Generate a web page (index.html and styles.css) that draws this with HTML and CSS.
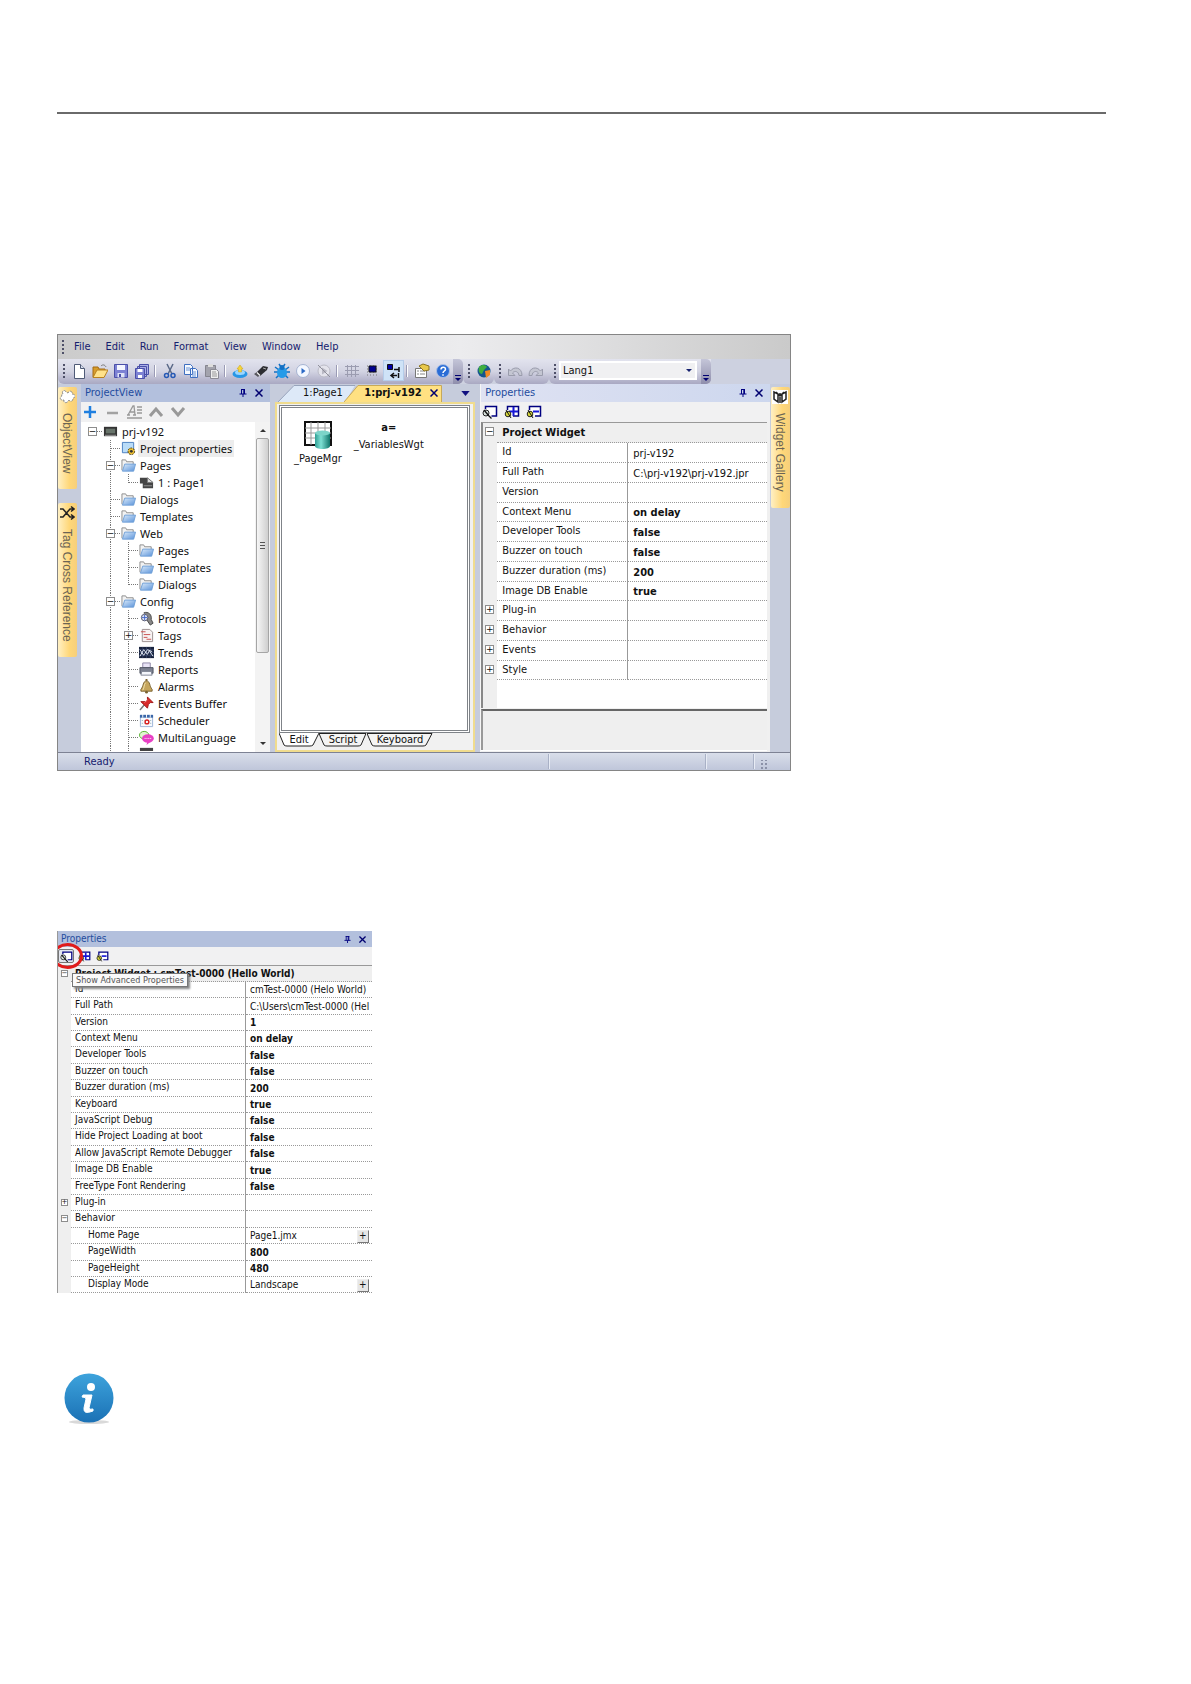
FILE: index.html
```html
<!DOCTYPE html>
<html lang="en">
<head>
<meta charset="utf-8">
<meta name="viewport" content="width=device-width, initial-scale=1">
<title>Project properties</title>
<link rel="stylesheet" href="styles.css">
</head>
<body>
<svg class="defs" aria-hidden="true">
  <defs>
    <linearGradient id="blue" x1="0" y1="0" x2="1" y2="1"><stop offset="0" stop-color="#dcebfa"/><stop offset="1" stop-color="#5a93da"/></linearGradient>
    <linearGradient id="teal"><stop offset="0" stop-color="#2f9f94"/><stop offset=".4" stop-color="#7fe0d4"/><stop offset="1" stop-color="#12766c"/></linearGradient>
    <linearGradient id="info" x1="0" y1="0" x2="0" y2="1"><stop offset="0" stop-color="#3da3dc"/><stop offset="1" stop-color="#1b71b5"/></linearGradient>
  </defs>
  <symbol id="folder" viewBox="0 0 16 16"><path d="M1 13V2h4l1 2h7v3" fill="#f2f2f2" stroke="#8c8c8c"/><path d="M1.500 14L4 6.500h11.500L13.500 14z" fill="url(#blue)" stroke="#6f9fd6"/></symbol>
  <symbol id="adv" viewBox="0 0 16 16"><path d="M3.500 5V2.500h11v9.500H9.500" fill="#fff" stroke="#000080" stroke-width="1.500"/><circle cx="4" cy="9" r="3" fill="#d9e2dc" stroke="#222"/><path d="M2 6l5 6M6 11l3.500 3.500" stroke="#111" stroke-width="1.300"/></symbol>
  <symbol id="adv-plus" viewBox="0 0 16 16"><path d="M3.500 6V2.500h11v9.500H9" fill="#fff" stroke="#000080" stroke-width="1.500"/><path d="M9.500 3v9M5 7.500h9" stroke="#1616d8" stroke-width="2"/><circle cx="4" cy="10" r="2.800" fill="#d8d83a" stroke="#222"/><path d="M2 6l5 8" stroke="#111"/></symbol>
  <symbol id="adv-minus" viewBox="0 0 16 16"><path d="M3.500 6V2.500h11v9.500H9" fill="#fff" stroke="#000080" stroke-width="1.500"/><path d="M7 7.500h6" stroke="#1616d8" stroke-width="2"/><circle cx="4" cy="10" r="2.800" fill="#d8d83a" stroke="#222"/><path d="M2 6l5 8" stroke="#111"/></symbol>
  <symbol id="pin" viewBox="0 0 8 8"><path d="M2 0.500h4M2.500 0v5M5.500 0v5M4.800 0v5M0.500 5h7M4 5v3" stroke="#000080" fill="none"/></symbol>
  <symbol id="close" viewBox="0 0 8 8"><path d="M0.500 0.500l7 7M7.500 0.500l-7 7" stroke="#000070" stroke-width="1.500"/></symbol>
  <symbol id="curl" viewBox="0 0 16 16"><path d="M1.500 6v6.500H8L5.500 10c2-2.500 6-2 6.500 2.500h3C15 4 7 3 3.500 8z" fill="#c4c6d2" stroke="#9a9cac"/></symbol>
  <symbol id="more" viewBox="0 0 10 24"><path d="M2 15.500h6" stroke="#000070"/><path d="M2 18h6l-3 3z" fill="#000070"/></symbol>
</svg>

<main class="page">
  <hr class="rule">

  <section class="app" aria-label="Project editor">
    <nav class="menubar">
      <span class="grip"></span>
      <button>File</button><button>Edit</button><button>Run</button><button>Format</button><button>View</button><button>Window</button><button>Help</button>
    </nav>
    <div class="toolbars">
      <div class="toolbar">
        <span class="grip"></span>
        <button aria-label="New"><svg viewBox="0 0 16 16"><path d="M3.500 1.500h6l4 4v10h-10z" fill="#fff" stroke="#4f5a77"/><path d="M9.500 1.500v4h4" fill="#d5dcec" stroke="#4f5a77"/></svg></button>
        <button aria-label="Open"><svg viewBox="0 0 16 16"><path d="M1 14V4h5l1 2h6v3" fill="#d79c2c" stroke="#a46a14"/><path d="M1 14.500L5 7h11l-4 7.500z" fill="#ffe28a" stroke="#b98220"/><path d="M9 3c2-2 4-1 5 1" fill="none" stroke="#777"/></svg></button>
        <button aria-label="Save"><svg viewBox="0 0 16 16"><path d="M1.500 1.500h13v13h-13z" fill="#7d82d4" stroke="#4a4fa8"/><path d="M4 2h8v5H4z" fill="#f4f6ff"/><path d="M4.500 10h7v4.500h-7z" fill="#dfe3f5"/><path d="M6 11h2v3H6z" fill="#4a4fa8"/></svg></button>
        <button aria-label="Save all"><svg viewBox="0 0 16 16"><path d="M5.500 1.500h9v10h-9zM3.500 3.500h9v10h-9z" fill="#a9aee6" stroke="#4a4fa8"/><path d="M1.500 5.500h9v10h-9z" fill="#7d82d4" stroke="#4a4fa8"/><path d="M3.500 6h5v3h-5zM4 12h4v3H4z" fill="#fff"/></svg></button>
        <span class="sep"></span>
        <button aria-label="Cut"><svg viewBox="0 0 16 16"><path d="M5 1l5 10M11 1L6 11" stroke="#5b6a88" stroke-width="1.500"/><circle cx="4.500" cy="12.500" r="2" fill="none" stroke="#2659b5" stroke-width="1.500"/><circle cx="11" cy="12.500" r="2" fill="none" stroke="#2659b5" stroke-width="1.500"/></svg></button>
        <button aria-label="Copy"><svg viewBox="0 0 16 16"><path d="M1.500 1.500h6l2 2v8h-8zM7.500 5.500h5l2 2v7h-7z" fill="#f5f9ff" stroke="#3f6fc0"/><path d="M3 5h4M3 7h4M9 9h4M9 11h4M9 13h4" stroke="#6b93d4"/></svg></button>
        <button aria-label="Paste"><svg viewBox="0 0 16 16"><path d="M1.500 2.500h10v11h-10z" fill="#a3a3ad" stroke="#85858f"/><path d="M4 1h5v3H4z" fill="#ddd"/><path d="M6.500 6.500h6l2 2v7h-8z" fill="#eee" stroke="#8b8b95"/><path d="M8 9h4M8 11h5M8 13h5" stroke="#999"/></svg></button>
        <span class="sep"></span>
        <button aria-label="Download"><svg viewBox="0 0 16 16"><ellipse cx="8" cy="11" rx="7.500" ry="4" fill="#2897e6"/><ellipse cx="8" cy="9.500" rx="5" ry="2.500" fill="#9bd6ff"/><path d="M8 2l3 4H9.500v3h-3V6H5z" fill="#f4d63a" stroke="#c99d1c" stroke-width=".5"/></svg></button>
        <button aria-label="Clean"><svg viewBox="0 0 16 16"><path d="M4 9l6-6 5 1-1 3-7 6z" fill="#2c2c31"/><path d="M1 11l3-2 3 3-2 2z" fill="#55555c"/><path d="M4 9.500l3 3" stroke="#f2f2f2" stroke-width="1.200"/><path d="M10 5l3 1" stroke="#aaa"/></svg></button>
        <button aria-label="Debug"><svg viewBox="0 0 16 16"><path d="M1 4l4 3M15 4l-4 3M0 9h16M2 15l4-4M14 15l-4-4M5 1l2 3M11 1L9 4" stroke="#1470c4" stroke-width="1.500"/><ellipse cx="8" cy="9.500" rx="5" ry="5.500" fill="#269be8"/><circle cx="8" cy="4.500" r="2.500" fill="#1470c4"/></svg></button>
        <button aria-label="Run"><svg viewBox="0 0 16 16"><circle cx="8" cy="8" r="6.500" fill="#f3f7ff" stroke="#a6b4d2"/><path d="M6.500 5L10.500 8l-4 3z" fill="#2b6ac6"/></svg></button>
        <button aria-label="Stop"><svg viewBox="0 0 16 16"><circle cx="8" cy="8" r="6" fill="#e4e4ec" stroke="#bbbbc6"/><path d="M6 4.500L11.500 8 6 11.500z" fill="#b9b9c4"/><path d="M2 2l12 12" stroke="#8f8f9a"/></svg></button>
        <span class="sep"></span>
        <button aria-label="Grid"><svg viewBox="0 0 16 16"><path d="M1 3.500h14M1 7.500h14M1 11.500h14M3.500 2v12M7.500 2v12M11.500 2v12" stroke="#9b9cb0"/></svg></button>
        <button aria-label="Snap"><svg viewBox="0 0 16 16"><path d="M2 3h12M2 6h12M2 9h12M2 12h12" stroke="#777" stroke-dasharray="1 2"/><path d="M4 3h7v6H4z" fill="#000090" stroke="#111"/></svg></button>
        <button class="on" aria-label="Snap to object"><svg viewBox="0 0 16 16"><path d="M1.500 1.500h5v5h-5z" fill="#0000a8" stroke="#111"/><path d="M8 6.500h5M13 4v5M5 12.500h6M8 10l-3 2.500L8 15M12.500 10v5" fill="none" stroke="#111" stroke-width="1.500"/></svg></button>
        <span class="sep"></span>
        <button aria-label="Properties"><svg viewBox="0 0 16 16"><path d="M1.500 5.500h11v9h-11z" fill="#fff" stroke="#777"/><path d="M3 8h2M3 11h2M6 8h5M6 11h5" stroke="#888"/><path d="M5 3l4-2 6 2v4l-5 1z" fill="#e8c84c" stroke="#8c7420"/></svg></button>
        <button aria-label="Help"><svg viewBox="0 0 16 16"><circle cx="8" cy="8" r="6.500" fill="#2a6cd6" stroke="#a9bfe6"/><path d="M6 6.500c0-3 4.500-3 4.500-.3C10.500 8 8 8 8 10M8 11.300v1.500" stroke="#fff" stroke-width="1.500" fill="none"/></svg></button>
        <button class="more" aria-label="More"><svg><use href="#more"/></svg></button>
      </div>
      <div class="toolbar">
        <span class="grip"></span>
        <button aria-label="Web"><svg viewBox="0 0 16 16"><circle cx="8" cy="8" r="6.500" fill="#14558f"/><path d="M3 4c3-3 7-2 8 0l-3 3-2 4c-3 0-4-4-3-7z" fill="#3fae3f"/><path d="M9 8l5-1v5l-4 3z" fill="#f08a24"/></svg></button>
      </div>
      <div class="toolbar undo">
        <span class="grip"></span>
        <button aria-label="Undo"><svg><use href="#curl"/></svg></button>
        <button aria-label="Redo"><svg class="flip"><use href="#curl"/></svg></button>
      </div>
      <div class="toolbar">
        <span class="grip"></span>
        <span class="lang"><select aria-label="Language"><option>Lang1</option></select></span>
        <button class="more" aria-label="More"><svg><use href="#more"/></svg></button>
      </div>
    </div>

    <div class="workspace">
      <div class="rail">
        <button class="side-tab"><svg viewBox="0 0 16 16"><path d="M4 5c-2-3 2-5 3-2l2 1c1-3 5-2 4 1 4 0 4 4 1 4 0 4-3 4-4 2-2 4-6 3-5 0-4 1-5-3-2-4-1-1 0-2 1-2z" fill="#fff" stroke="#8d8d8d" stroke-dasharray="3 1"/></svg>ObjectView</button>
        <button class="side-tab tall"><svg viewBox="0 0 16 16"><path d="M1 4h3l7 8h4M1 12h3l7-8h4M12 1.500L15 4l-3 2.500M12 9.500l3 2.500-3 2.500" fill="none" stroke="#222" stroke-width="1.500"/></svg>Tag Cross Reference</button>
      </div>

      <section class="panel project">
        <header class="title"><h2>ProjectView</h2><button aria-label="Pin"><svg><use href="#pin"/></svg></button><button aria-label="Close"><svg><use href="#close"/></svg></button></header>
        <div class="tools wide">
          <button aria-label="Add"><svg viewBox="0 0 16 16"><path d="M8 2v12M2 8h12" stroke="#1f7fe0" stroke-width="2.500"/></svg></button>
          <button aria-label="Remove"><svg viewBox="0 0 16 16"><path d="M3 9h11" stroke="#a2a2a2" stroke-width="2.500"/></svg></button>
          <button aria-label="Rename"><svg viewBox="0 0 16 16"><path d="M2 11L7 2h1l1 9M4 8h5M1 11h3M7 11h3M11 3h5M11 6h5M11 9h5M1 14h15" fill="none" stroke="#999" stroke-width="1.300"/></svg></button>
          <button aria-label="Move up"><svg viewBox="0 0 16 16"><path d="M2 12l6-7 6 7" fill="none" stroke="#999" stroke-width="3"/></svg></button>
          <button aria-label="Move down"><svg viewBox="0 0 16 16"><path d="M2 4l6 7 6-7" fill="none" stroke="#999" stroke-width="3"/></svg></button>
        </div>
        <div class="tree-wrap">
          <ul class="tree">
            <li><i class="g h"><button class="box" aria-label="Collapse">−</button></i><svg viewBox="0 0 16 16"><path d="M1 3h14v10H1z" fill="#333"/><path d="M3 5h10v5H3z" fill="#67736a"/><path d="M2 12h12" stroke="#aaa"/></svg>prj-v192</li>
            <li class="sel"><i class="g"></i><i class="g v h"></i><svg viewBox="0 0 16 16"><path d="M1.500 1.500h12v11h-12z" fill="#b9dcf8" stroke="#4a7fc0"/><circle cx="11" cy="11" r="3.500" fill="#f1c232" stroke="#3d3210" stroke-dasharray="2 1"/><circle cx="11" cy="11" r="1.500" fill="#333"/></svg><span>Project properties</span></li>
            <li><i class="g"></i><i class="g v h"><button class="box" aria-label="Collapse">−</button></i><svg><use href="#folder"/></svg>Pages</li>
            <li><i class="g"></i><i class="g v"></i><i class="g v h end"></i><svg viewBox="0 0 16 16"><path d="M1 3h8l6 5v6H4V9H1z" fill="#444"/><path d="M9 3v5h6z" fill="#ddd" stroke="#777"/><path d="M5 11.500h9" stroke="#999"/></svg>1 : Page1</li>
            <li><i class="g"></i><i class="g v h"></i><svg><use href="#folder"/></svg>Dialogs</li>
            <li><i class="g"></i><i class="g v h"></i><svg><use href="#folder"/></svg>Templates</li>
            <li><i class="g"></i><i class="g v h"><button class="box" aria-label="Collapse">−</button></i><svg><use href="#folder"/></svg>Web</li>
            <li><i class="g"></i><i class="g v"></i><i class="g v h"></i><svg><use href="#folder"/></svg>Pages</li>
            <li><i class="g"></i><i class="g v"></i><i class="g v h"></i><svg><use href="#folder"/></svg>Templates</li>
            <li><i class="g"></i><i class="g v"></i><i class="g v h end"></i><svg><use href="#folder"/></svg>Dialogs</li>
            <li><i class="g"></i><i class="g v h"><button class="box" aria-label="Collapse">−</button></i><svg><use href="#folder"/></svg>Config</li>
            <li><i class="g"></i><i class="g v"></i><i class="g v h"></i><svg viewBox="0 0 16 16"><path d="M5 2c5-2 9 2 8 7l2 4-3 2-4-6" fill="#888" stroke="#444"/><circle cx="6" cy="7" r="3.500" fill="#dfe6f8" stroke="#556"/><path d="M6 4v6M3 7h6" stroke="#4468c8"/></svg>Protocols</li>
            <li><i class="g"></i><i class="g v"></i><i class="g v h"><button class="box" aria-label="Expand">+</button></i><svg viewBox="0 0 16 16"><path d="M3.500 1.500h8l3 3v10h-11z" fill="#f7f3f3" stroke="#9a8f8f"/><path d="M2 4h5M5 7h7M5 10h4M8 12h5" stroke="#c94d4d"/></svg>Tags</li>
            <li><i class="g"></i><i class="g v"></i><i class="g v h"></i><svg viewBox="0 0 16 16"><path d="M0 2h16v12H0z" fill="#18233e"/><path d="M0 5h16M0 8h16M0 11h16M4 2v12M8 2v12M12 2v12" stroke="#4a5c86" stroke-width=".5"/><path d="M1 12l4-7 4 5 2-4 4 6M1 5l4 6 4-6 5 2" fill="none" stroke="#e5ecf7"/></svg>Trends</li>
            <li><i class="g"></i><i class="g v"></i><i class="g v h"></i><svg viewBox="0 0 16 16"><path d="M4 1h8v5H4z" fill="#e9e4f6" stroke="#8d86a5"/><path d="M1 6h14v6H1z" fill="#7d8291" stroke="#4d5260"/><path d="M3 10h10l1 4H2z" fill="#f4f6fb" stroke="#7d8291"/></svg>Reports</li>
            <li><i class="g"></i><i class="g v"></i><i class="g v h"></i><svg viewBox="0 0 16 16"><path d="M8 2c4 0 3 6 6 9v2H2v-2c3-3 2-9 6-9z" fill="#c5a55c" stroke="#7a6230"/><path d="M7 4c-2 2-1 5-3 8" stroke="#f3e4b0" fill="none"/><circle cx="8" cy="14" r="1.500" fill="#7a6230"/><path d="M8 0v2" stroke="#7a6230" stroke-width="2"/></svg>Alarms</li>
            <li><i class="g"></i><i class="g v"></i><i class="g v h"></i><svg viewBox="0 0 16 16"><path d="M1 15l5-6" stroke="#777" stroke-width="1.500"/><path d="M2 6l7 7 1-4 2-2 3 0-6-6 0 3-2 2z" fill="#d92b2b" stroke="#a01515"/><path d="M6 7l3-3" stroke="#ff9a9a"/></svg>Events Buffer</li>
            <li><i class="g"></i><i class="g v"></i><i class="g v h"></i><svg viewBox="0 0 16 16"><path d="M1.500 2.500h13v12h-13z" fill="#f7faff" stroke="#9bb2d6"/><path d="M1 2h14v3H1z" fill="#3a66a8"/><path d="M4 1v4M8 1v4M12 1v4" stroke="#fff"/><path d="M3 8h11M3 11h11" stroke="#8aa" stroke-dasharray="1 2"/><circle cx="8.500" cy="9.500" r="2" fill="none" stroke="#d92020" stroke-width="1.500"/></svg>Scheduler</li>
            <li><i class="g"></i><i class="g v"></i><i class="g v h"></i><svg viewBox="0 0 16 16"><ellipse cx="5.500" cy="5.500" rx="5" ry="4" fill="#dff5d0" stroke="#55b02e"/><ellipse cx="9.500" cy="9" rx="6.300" ry="4.500" fill="#e83fc4"/><path d="M9 12l-1 4 5-4z" fill="#e83fc4"/><path d="M6 9h7" stroke="#fff" stroke-dasharray="1 1"/></svg>MultiLanguage</li>
            <li class="cut"><i class="g"></i><i class="g v"></i><i class="g v"></i><svg viewBox="0 0 16 16"><path d="M1 2h14v12H1z" fill="#444"/></svg>System Group</li>
          </ul>
          <div class="scroll" aria-hidden="true"><span class="arrow up"></span><span class="thumb"></span><span class="arrow down"></span></div>
        </div>
      </section>

      <section class="editor">
        <div class="doc-tabs">
          <button class="doc first"><svg viewBox="0 0 78 18" preserveAspectRatio="none"><path d="M0 18L16 1.500h61l-10 16.500z" fill="#dde9f8"/><path d="M0 18L16 1.500h61" fill="none" stroke="#98a4bc"/></svg><span>1:Page1</span></button>
          <button class="doc active"><svg viewBox="0 0 98 18" preserveAspectRatio="none"><path d="M0 18L14 1.500h83.500V18z" fill="#ffe182"/><path d="M0 18L14 1.500h83.500V18" fill="none" stroke="#c7a95a"/></svg><span>1:prj-v192</span></button>
          <button class="doc-close" aria-label="Close page"><svg><use href="#close"/></svg></button>
          <button class="doc-list" aria-label="Pages"><svg viewBox="0 0 10 6"><path d="M0 0h10L5 6z" fill="#101080"/></svg></button>
        </div>
        <div class="frame">
          <div class="canvas">
            <figure><svg class="big" viewBox="0 0 30 30"><path d="M2 2h26v23H2z" fill="#fff" stroke="#111" stroke-width="2"/><path d="M2 8h26M2 13h26M2 18h26M8 2v23M15 2v23M22 2v23" stroke="#999"/><path d="M12 13v13c0 4 15 4 15 0V13z" fill="url(#teal)"/><ellipse cx="19.500" cy="13" rx="7.500" ry="2.500" fill="#7cd4c9"/></svg><figcaption>_PageMgr</figcaption></figure>
            <figure><b>a=</b><figcaption>_VariablesWgt</figcaption></figure>
          </div>
          <div class="sheet-tabs">
            <button class="sheet on"><svg viewBox="0 0 40 14" preserveAspectRatio="none"><path d="M0 0l5 12q1 1 3 1h23q2 0 3-1l6-12" fill="#fff" stroke="#222"/></svg><span>Edit</span></button>
            <button class="sheet"><svg viewBox="0 0 48 14" preserveAspectRatio="none"><path d="M0 .5l5 11.500q1 1 3 1h31q2 0 3-1l5-11.500z" fill="#f4f4f4" stroke="#222"/></svg><span>Script</span></button>
            <button class="sheet key"><svg viewBox="0 0 66 14" preserveAspectRatio="none"><path d="M0 .5l5 11.500q1 1 3 1h48q2 0 3-1l6-11.500z" fill="#f4f4f4" stroke="#222"/></svg><span>Keyboard</span></button>
          </div>
        </div>
      </section>

      <section class="panel props">
        <header class="title light"><h2>Properties</h2><button aria-label="Pin"><svg><use href="#pin"/></svg></button><button aria-label="Close"><svg><use href="#close"/></svg></button></header>
        <div class="tools">
          <button aria-label="Show Advanced Properties"><svg><use href="#adv"/></svg></button>
          <button aria-label="Expand all"><svg><use href="#adv-plus"/></svg></button>
          <button aria-label="Collapse all"><svg><use href="#adv-minus"/></svg></button>
        </div>
        <div class="grid-wrap">
          <table class="grid">
            <colgroup><col class="gutter"><col class="name"><col></colgroup>
            <thead><tr><td><button class="box" aria-label="Collapse">−</button></td><th colspan="2">Project Widget</th></tr></thead>
            <tbody>
              <tr><td></td><th>Id</th><td>prj-v192</td></tr>
              <tr><td></td><th>Full Path</th><td>C:\prj-v192\prj-v192.jpr</td></tr>
              <tr><td></td><th>Version</th><td></td></tr>
              <tr><td></td><th>Context Menu</th><td><b>on delay</b></td></tr>
              <tr><td></td><th>Developer Tools</th><td><b>false</b></td></tr>
              <tr><td></td><th>Buzzer on touch</th><td><b>false</b></td></tr>
              <tr><td></td><th>Buzzer duration (ms)</th><td><b>200</b></td></tr>
              <tr><td></td><th>Image DB Enable</th><td><b>true</b></td></tr>
              <tr><td><button class="box" aria-label="Expand">+</button></td><th>Plug-in</th><td></td></tr>
              <tr><td><button class="box" aria-label="Expand">+</button></td><th>Behavior</th><td></td></tr>
              <tr><td><button class="box" aria-label="Expand">+</button></td><th>Events</th><td></td></tr>
              <tr><td><button class="box" aria-label="Expand">+</button></td><th>Style</th><td></td></tr>
            </tbody>
          </table>
        </div>
        <div class="hint"></div>
      </section>

      <div class="rail right">
        <button class="side-tab gallery"><svg viewBox="0 0 16 16"><path d="M0 1h16v14H0z" fill="#fff"/><path d="M2 3v7l4 3V5zM14 3v7l-4 3V5zM8 4v10M4 3l4 4 4-4" fill="none" stroke="#222" stroke-width="1.500"/></svg>Widget Gallery</button>
      </div>
    </div>

    <footer class="status"><span>Ready</span><i></i><i></i><i></i></footer>
  </section>

  <section class="panel props small" aria-label="Advanced properties">
    <header class="title"><h2>Properties</h2><button aria-label="Pin"><svg><use href="#pin"/></svg></button><button aria-label="Close"><svg><use href="#close"/></svg></button></header>
    <div class="tools">
      <button class="pressed" aria-label="Show Advanced Properties"><svg><use href="#adv"/></svg></button>
      <button aria-label="Expand all"><svg><use href="#adv-plus"/></svg></button>
      <button aria-label="Collapse all"><svg><use href="#adv-minus"/></svg></button>
    </div>
    <table class="grid">
      <colgroup><col class="gutter"><col class="name"><col></colgroup>
      <thead><tr><td><button class="box" aria-label="Collapse">−</button></td><th colspan="2">Project Widget : cmTest-0000 (Hello World)</th></tr></thead>
      <tbody>
        <tr><td></td><th>Id</th><td>cmTest-0000 (Helo World)</td></tr>
        <tr><td></td><th>Full Path</th><td>C:\Users\cmTest-0000 (Hel</td></tr>
        <tr><td></td><th>Version</th><td><b>1</b></td></tr>
        <tr><td></td><th>Context Menu</th><td><b>on delay</b></td></tr>
        <tr><td></td><th>Developer Tools</th><td><b>false</b></td></tr>
        <tr><td></td><th>Buzzer on touch</th><td><b>false</b></td></tr>
        <tr><td></td><th>Buzzer duration (ms)</th><td><b>200</b></td></tr>
        <tr><td></td><th>Keyboard</th><td><b>true</b></td></tr>
        <tr><td></td><th>JavaScript Debug</th><td><b>false</b></td></tr>
        <tr><td></td><th>Hide Project Loading at boot</th><td><b>false</b></td></tr>
        <tr><td></td><th>Allow JavaScript Remote Debugger</th><td><b>false</b></td></tr>
        <tr><td></td><th>Image DB Enable</th><td><b>true</b></td></tr>
        <tr><td></td><th>FreeType Font Rendering</th><td><b>false</b></td></tr>
        <tr><td><button class="box" aria-label="Expand">+</button></td><th>Plug-in</th><td></td></tr>
        <tr><td><button class="box" aria-label="Collapse">−</button></td><th>Behavior</th><td></td></tr>
        <tr class="sub"><td></td><th>Home Page</th><td><span class="cell">Page1.jmx<button class="pick">+</button></span></td></tr>
        <tr class="sub"><td></td><th>PageWidth</th><td><b>800</b></td></tr>
        <tr class="sub"><td></td><th>PageHeight</th><td><b>480</b></td></tr>
        <tr class="sub"><td></td><th>Display Mode</th><td><span class="cell">Landscape<button class="pick">+</button></span></td></tr>
      </tbody>
    </table>
    <div class="tip" role="tooltip">Show Advanced Properties</div>
    <span class="ring"></span>
  </section>

  <svg class="note" viewBox="0 0 52 52" role="img" aria-label="Information"><ellipse cx="26" cy="49" rx="20" ry="2" fill="#d9d9d9"/><circle cx="26" cy="25" r="24.500" fill="url(#info)"/><circle cx="28" cy="14" r="4" fill="#fff"/><path d="M20 22h9l-3 13q0 2 4 1v2q-10 4-9-3l2-9q0-2-4-2z" fill="#fff" stroke="#fff"/></svg>
</main>
</body>
</html>
```
FILE: styles.css
```css
* { box-sizing: border-box; }
body { margin: 0; background: #fff; color: #111; font: 11px/16px "DejaVu Sans Condensed", "DejaVu Sans", sans-serif; }
button { display: inline-flex; align-items: center; justify-content: center; margin: 0; padding: 0; border: 0; background: none; color: inherit; font: inherit; }
svg { display: block; flex: none; width: 16px; height: 16px; }
.defs { position: absolute; width: 0; height: 0; }
h2 { margin: 0; font: inherit; }

.page { padding: 112px 85px 240px 57px; }
.rule { height: 2px; margin: 0 0 220px; border: 0; background: #6a6a6a; }

/* Application window */
.app { width: 70%; min-width: 734px; border: 1px solid #858585; background: #c6ccdc; }
.menubar { display: flex; align-items: center; gap: 15px; height: 24px; padding-left: 4px; background: linear-gradient(90deg, #cbcbcb, #ececee 55%, #cacaca); color: #15206e; }
.menubar .grip { margin-right: -5px; }
.grip { flex: none; width: 2px; height: 14px; background: repeating-linear-gradient(#4e5068 0 2px, transparent 2px 4px); }

.toolbars { display: flex; height: 25px; background: #cdd1e0; }
.toolbar { display: flex; align-items: center; padding: 0 0 2px 5px; border-radius: 0 0 6px 6px; background: linear-gradient(#e2e3ee, #d2d3e2 50%, #a9a8c2); }
.toolbar .grip { margin-right: 3px; }
.toolbar button { width: 21px; height: 21px; }
.toolbar button.on { border: 1px solid #b5cdea; background: #cfe3f7; }
.toolbar .more { align-self: flex-start; width: 10px; height: 25px; background: linear-gradient(#c4c5d8, #8f8eac); border-radius: 0 5px 5px 0; }
.toolbar .more svg { width: 10px; height: 24px; }
.toolbar.undo { padding-right: 3px; }
.sep { width: 1px; height: 12px; margin: 0 3px; background: #fff; box-shadow: -1px 0 #9a9bb5; }
.flip { transform: scaleX(-1); }
.lang { position: relative; width: 138px; height: 19px; margin-right: 4px; }
.lang select { display: block; width: 100%; height: 19px; padding: 0 2px; border: 2px solid #fff; background: #f0f0f2; appearance: none; color: #111; font: inherit; }
.lang::after { content: ""; position: absolute; right: 5px; top: 8px; border: 3px solid transparent; border-top-color: #15206e; }

.workspace { display: flex; min-height: 369px; border-bottom: 1px solid #7d8294; }
.rail { display: flex; flex: none; flex-direction: column; gap: 14px; width: 23px; padding-top: 3px; }
.rail.right { align-items: flex-end; width: 20px; }
.side-tab { justify-content: flex-start; gap: 8px; width: 19px; height: 102px; padding: 2px 1px 0 0; border-radius: 2px; background: linear-gradient(90deg, #fff0c4, #ffd778 60%, #f6cf7b); color: #6b6455; font: 12px/18px "Liberation Sans", sans-serif; writing-mode: vertical-rl; white-space: nowrap; }
.side-tab.tall { height: 154px; }
.side-tab.gallery { height: 121px; }

.panel { display: flex; flex-direction: column; background: #f0f0f0; }
.project { flex: none; width: 189px; }
.title { display: flex; align-items: center; gap: 8px; height: 18px; padding: 0 7px 0 4px; background: #b3c0dd; color: #1f4c9e; }
.title h2 { flex: 1; }
.title svg { width: 8px; height: 8px; }
.title.light { background: linear-gradient(90deg, #dfe2f2, #cdd7ee); }
.tools { display: flex; align-items: center; gap: 6px; height: 20px; padding-left: 1px; background: #f1f1f2; }

.tree-wrap { display: flex; flex: 1; overflow: hidden; background: #fff; }
.tree { flex: 1; margin: 0; padding: 1px 0 0 3px; list-style: none; font: 11px/17px "Noto Sans", "Open Sans", sans-serif; white-space: nowrap; }
.tree li { display: flex; align-items: center; height: 17px; }
.tree li.cut { align-items: flex-start; height: 5px; overflow: hidden; }
.tree li > svg { width: 15px; height: 15px; margin: 0 4px 0 1px; }
.sel span { margin-left: -2px; padding: 0 2px; background: #ededed; }
.g { position: relative; flex: none; width: 18px; height: 17px; }
.g.v::before { content: ""; position: absolute; left: 8px; top: 0; bottom: 0; border-left: 1px dotted #777; }
.g.end::before { bottom: 8px; }
.g.h::after { content: ""; position: absolute; left: 9px; right: 0; top: 8px; border-top: 1px dotted #777; }
.box { width: 9px; height: 9px; border: 1px solid #8d8d8d; background: #fff; font: 9px/7px "DejaVu Sans", sans-serif; }
.g .box { position: absolute; z-index: 1; left: 4px; top: 4px; }
.scroll { display: flex; flex-direction: column; align-items: center; width: 15px; padding: 7px 1px; background: #f3f3f3; }
.thumb { width: 13px; height: 215px; margin-top: 6px; border: 1px solid #a5a5a5; border-radius: 2px; background: repeating-linear-gradient(#555 0 1px, transparent 1px 3px) center / 5px 8px no-repeat, linear-gradient(90deg, #f6f6f6, #cfcfcf); }
.arrow { border: 3px solid transparent; }
.arrow.up { border-top: 0; border-bottom-color: #333; }
.arrow.down { margin-top: auto; border-bottom: 0; border-top-color: #333; }

.editor { display: flex; flex: 1; flex-direction: column; margin: 0 5px; }
.doc-tabs { display: flex; height: 18px; padding-left: 3px; }
.doc { position: relative; width: 78px; height: 18px; padding-left: 12px; }
.doc svg { position: absolute; inset: 0; width: 100%; height: 100%; }
.doc span { position: relative; }
.doc.active { width: 98px; margin-left: -12px; padding: 0; font-weight: bold; }
.doc-close { position: relative; width: 8px; margin-left: -12px; }
.doc-close svg { width: 8px; height: 8px; }
.doc-list { margin: 0 5px 0 auto; }
.doc-list svg { width: 9px; height: 5px; }
.frame { display: flex; flex: 1; flex-direction: column; padding: 1px 3px 2px 2px; border: 2px solid #f0dc8e; background: #f1f1f1; }
.canvas { display: flex; flex: 1; gap: 12px; align-items: flex-start; padding: 12px; border: 3px double #7f8388; background: #fff; }
figure { display: flex; flex-direction: column; align-items: center; margin: 0; }
figure .big { width: 30px; height: 30px; }
figcaption { padding-top: 1px; }
.sheet-tabs { display: flex; height: 15px; }
.sheet { position: relative; width: 40px; height: 14px; line-height: 12px; padding-bottom: 1px; }
.sheet + .sheet { width: 48px; }
.sheet + .sheet.key { width: 66px; }
.sheet svg { position: absolute; inset: 0; width: 100%; height: 100%; }
.sheet span { position: relative; }

.props { flex: none; width: 290px; border-left: 1px solid #f6f6f6; }
.grid-wrap { height: 286px; margin-right: 3px; border-left: 2px solid #888; border-top: 1px solid #999; background: linear-gradient(90deg, #efefef 14px, #fff 14px); }
.grid { width: 100%; border-collapse: separate; border-spacing: 0; table-layout: fixed; white-space: nowrap; }
.grid .gutter { width: 14px; }
.grid .name { width: 131px; }
.grid td, .grid th { height: 20px; padding: 0 0 0 5px; border-bottom: 1px dotted #999; font-weight: normal; line-height: 16px; text-align: left; overflow: hidden; }
.grid td:first-child { padding: 4px 0 0 2px; border: 0; background: #efefef; vertical-align: top; }
.grid td:first-child .box { display: flex; }
.grid tbody th { padding-top: 1px; border-right: 1px solid #999; vertical-align: top; }
.grid tbody td:last-child { vertical-align: bottom; }
.grid thead th { height: 19px; background: #efefef; font-weight: bold; }
.props:not(.small) tbody tr:nth-child(4n) > * { height: 19px; }
.hint { flex: 1; margin: 1px 3px 2px 0; border-top: 2px solid #666; border-left: 2px solid #999; background: #efefef; box-shadow: 0 1px #fff; }

.status { display: flex; align-items: center; justify-content: flex-end; height: 17px; padding-left: 26px; background: linear-gradient(#d9deea, #bfc6da); color: #15206e; }
.status span { margin-right: auto; }
.status i { width: 157px; height: 15px; border-left: 1px solid #a9b1c6; box-shadow: inset 1px 0 #e8ecf5; }
.status i + i { width: 48px; }
.status i + i + i { width: 37px; padding: 6px 22px 0 5px; background: radial-gradient(circle, #8b91a8 1px, transparent 1px) 6px 4px / 4px 4px repeat; background-clip: content-box; }

/* Detail of the property list */
.small { position: relative; width: 30%; min-width: 314px; margin: 160px 0 80px; border-left: 1px solid #999; overflow: hidden; font-size: 10px; line-height: 14px; }
.small .title { height: 16px; padding: 0 6px 0 3px; }
.small .title svg { width: 7px; height: 7px; }
.small .tools { height: 18px; gap: 2px; padding: 0; }
.small .tools button { width: 16px; height: 14px; }
.small .tools svg { width: 13px; height: 13px; }
.small .tools .pressed { border: 1px solid #777; border-radius: 2px; background: #e3e6ee; }
.small .grid { background: #fff; border-top: 1px solid #999; }
.small .grid .gutter { width: 13px; }
.small .grid .name { width: 175px; }
.small .grid td, .small .grid th { height: 16px; padding: 0 0 0 4px; line-height: 14px; }
.small .grid td:first-child { padding: 4px 0 0 3px; }
.small .box { width: 7px; height: 7px; font-size: 7px; line-height: 5px; }
.small tbody tr:nth-child(5n) > *, .small tbody tr:nth-child(5n+2) > * { height: 17px; }
.small .grid .sub th { padding-left: 17px; }
.cell { display: flex; align-items: center; justify-content: space-between; height: 14px; padding-right: 3px; }
.pick { width: 12px; height: 13px; border: 1px solid; border-color: #eee #777 #777 #eee; background: #e6e6e6; }
.tip { position: absolute; left: 14px; top: 42px; padding: 0 3px; border: 1px solid #777; background: #fafafa; box-shadow: 2px 2px 2px #888; color: #555; font-size: 9px; line-height: 12px; }
.ring { position: absolute; left: -6px; top: 12px; width: 31px; height: 26px; border: 3px solid #e01b1b; border-radius: 50%; }

.note { width: 52px; height: 52px; margin-left: 6px; }
```
